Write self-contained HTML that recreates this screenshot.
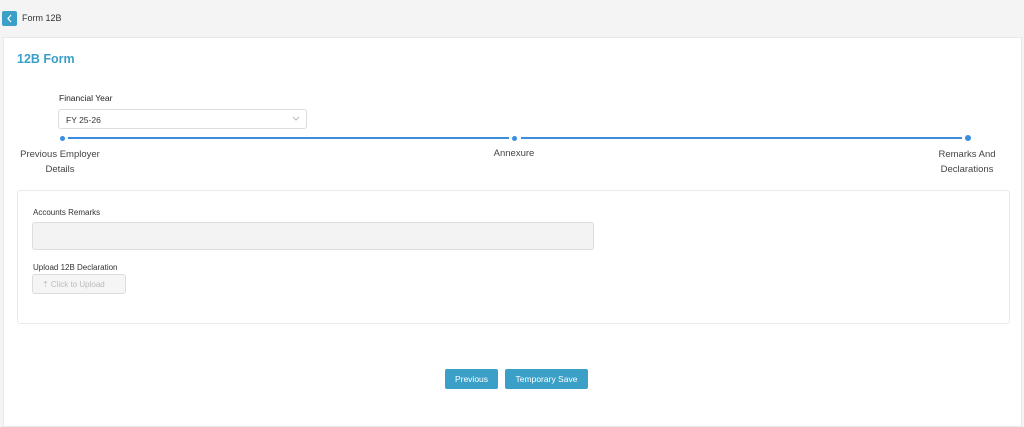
<!DOCTYPE html>
<html><head><style>
*{margin:0;padding:0;box-sizing:border-box}
body{width:1024px;height:422px;background:#f4f4f4;font-family:"Liberation Sans",sans-serif;position:relative;overflow:hidden;color:#333}
.a{position:absolute}
</style></head><body>
<div class="a" style="left:2px;top:11px;width:15px;height:15px;background:#3aa0c8;border-radius:2px"><svg width="15" height="15"><path d="M9 4L6 7.5L9 11" stroke="#fff" stroke-width="1.2" fill="none"/></svg></div>
<div class="a" style="left:22px;top:13px;font-size:9px;color:#333">Form 12B</div>
<div class="a" style="left:3px;top:37px;width:1019px;height:390px;background:#fff;border:1px solid #e8e8e8"></div>
<div class="a" style="left:17px;top:52px;font-size:12.5px;font-weight:bold;color:#3aa0c8">12B Form</div>
<div class="a" style="left:59px;top:93px;font-size:8.5px;color:#222">Financial Year</div>
<div class="a" style="left:58px;top:109px;width:249px;height:20px;border:1px solid #ddd;border-radius:3px;font-size:8.5px;padding:5px 7px;color:#333">FY 25-26<svg style="position:absolute;right:6px;top:6px" width="8" height="6"><path d="M1 1L4 4L7 1" stroke="#bbb" fill="none"/></svg></div>
<div class="a" style="left:60px;top:136px;width:5px;height:5px;border-radius:50%;background:#3b8de0"></div>
<div class="a" style="left:68px;top:137px;width:441px;height:2px;background:#3b8de0"></div>
<div class="a" style="left:512px;top:136px;width:5px;height:5px;border-radius:50%;background:#3b8de0"></div>
<div class="a" style="left:521px;top:137px;width:441px;height:2px;background:#3b8de0"></div>
<div class="a" style="left:965px;top:135px;width:6px;height:6px;border-radius:50%;background:#3b8de0"></div>
<div class="a" style="left:10px;top:147px;width:100px;text-align:center;font-size:9.5px;line-height:15px;color:#444">Previous Employer<br>Details</div>
<div class="a" style="left:464px;top:148px;width:100px;text-align:center;font-size:9.5px;line-height:12px;color:#444">Annexure</div>
<div class="a" style="left:917px;top:147px;width:100px;text-align:center;font-size:9.5px;line-height:15px;color:#444">Remarks And<br>Declarations</div>
<div class="a" style="left:17px;top:190px;width:993px;height:134px;border:1px solid #eaeaea;border-radius:3px"></div>
<div class="a" style="left:33px;top:208px;font-size:8px;color:#333">Accounts Remarks</div>
<div class="a" style="left:32px;top:222px;width:562px;height:28px;background:#f3f3f3;border:1px solid #ddd;border-radius:3px"></div>
<div class="a" style="left:33px;top:263px;font-size:8px;color:#333">Upload 12B Declaration</div>
<div class="a" style="left:32px;top:274px;width:94px;height:20px;background:#f5f5f5;border:1px solid #ddd;border-radius:3px;font-size:8px;color:#bbb;padding:5px 0 0 9px">⇡ Click to Upload</div>
<div class="a" style="left:445px;top:369px;width:53px;height:20px;background:#3aa0c8;border-radius:2px;color:#fff;font-size:8.5px;text-align:center;line-height:20px">Previous</div>
<div class="a" style="left:505px;top:369px;width:83px;height:20px;background:#3aa0c8;border-radius:2px;color:#fff;font-size:8.5px;text-align:center;line-height:20px">Temporary Save</div>
</body></html>
